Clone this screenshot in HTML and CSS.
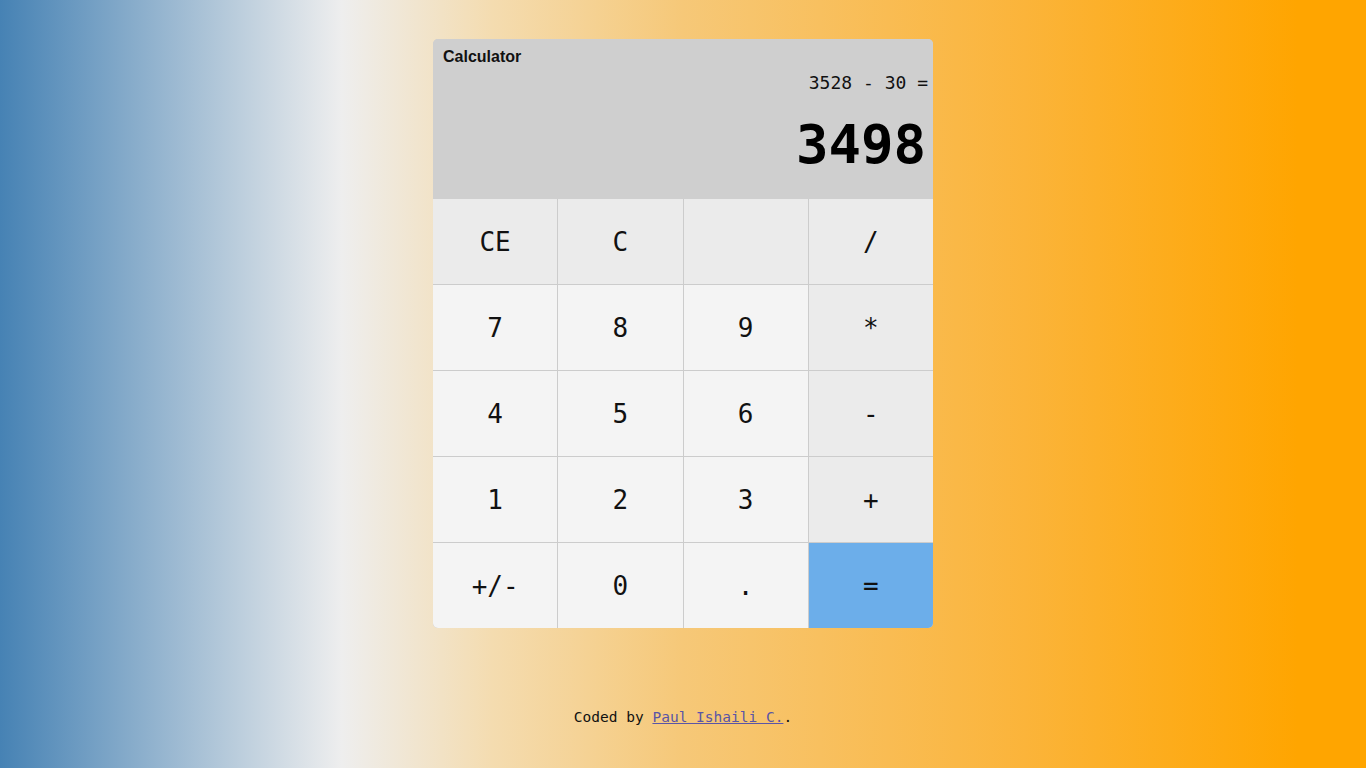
FILE: index.html
```html
<!DOCTYPE html>
<html lang="en">
<head>
<meta charset="utf-8">
<title>Calculator</title>
<link rel="stylesheet" href="styles.css">
</head>
<body>
<main class="page">
  <section class="calc">
    <header class="display">
      <h1 class="title">Calculator</h1>
      <div class="expr">3528 - 30 =</div>
      <div class="result">3498</div>
    </header>
    <div class="keys">
      <button class="key op">CE</button>
      <button class="key op">C</button>
      <button class="key op"></button>
      <button class="key op">/</button>
      <button class="key">7</button>
      <button class="key">8</button>
      <button class="key">9</button>
      <button class="key op">*</button>
      <button class="key">4</button>
      <button class="key">5</button>
      <button class="key">6</button>
      <button class="key op">-</button>
      <button class="key">1</button>
      <button class="key">2</button>
      <button class="key">3</button>
      <button class="key op">+</button>
      <button class="key">+/-</button>
      <button class="key">0</button>
      <button class="key">.</button>
      <button class="key eq">=</button>
    </div>
  </section>
  <footer class="credit">Coded by <a href="#">Paul Ishaili C.</a>.</footer>
</main>
</body>
</html>
```

FILE: styles.css
```css
* { box-sizing: border-box; }

html, body {
  margin: 0;
  padding: 0;
}

body {
  min-height: 100vh;
  background: linear-gradient(to right,
    #4682b4 0%,
    #eeeeee 25%,
    #f4dcb0 36%,
    #f6c878 50%,
    #fbb43a 75%,
    #ffa500 95%,
    #ffa500 100%);
  font-family: "DejaVu Sans Mono", monospace;
  color: #111;
}

.page {
  display: flex;
  flex-direction: column;
  align-items: center;
  padding-top: 39px;
}

.calc {
  width: 500px;
  border-radius: 5px;
  overflow: hidden;
  background: #cfcfcf;
}

.display {
  height: 160px;
  padding: 8px 5px 0 10px;
  background: #cfcfcf;
  display: flex;
  flex-direction: column;
}

.title {
  margin: 0;
  font-family: "Liberation Sans", Arial, sans-serif;
  font-weight: bold;
  font-size: 16px;
  line-height: 20px;
  color: #111;
}

.expr {
  margin-top: 5px;
  text-align: right;
  font-size: 18px;
  line-height: 22px;
  color: #111;
}

.result {
  margin-top: 21px;
  text-align: right;
  font-size: 54px;
  line-height: 60px;
  font-weight: bold;
  padding-right: 2px;
  color: #000;
}

.keys {
  display: grid;
  grid-template-columns: repeat(4, 1fr);
  grid-auto-rows: 85px;
  gap: 1px;
  background: #cccccc;
}

.key {
  border: 0;
  margin: 0;
  padding: 0;
  background: #f4f4f4;
  font-family: "DejaVu Sans Mono", monospace;
  font-size: 26px;
  color: #111;
  display: flex;
  align-items: center;
  justify-content: center;
}

.key.op {
  background: #ebebeb;
}

.key.eq {
  background: #6caeea;
}

.credit {
  margin-top: 79px;
  font-size: 14.5px;
  line-height: 20px;
  color: #111;
}

.credit a {
  color: #5a55a6;
  text-decoration: underline;
}
```
